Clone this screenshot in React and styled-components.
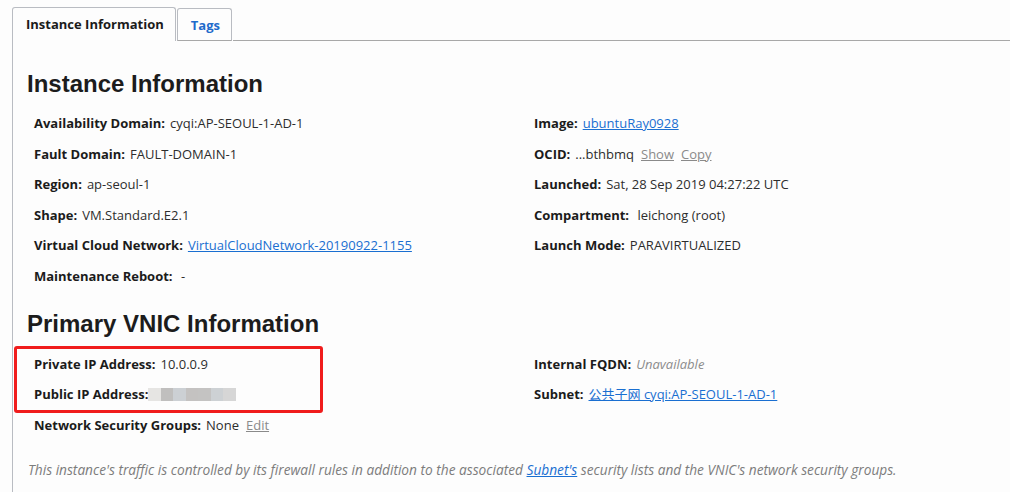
import styled, { createGlobalStyle } from 'styled-components'

const GlobalStyle = createGlobalStyle`
  html, body {
    margin: 0;
    padding: 0;
    background: #fdfdfd;
    font-family: "Open Sans", "Noto Sans", "Noto Sans CJK SC", sans-serif;
    color: #2a2a2a;
  }
`

const leftRows = [
  { label: 'Availability Domain:', value: 'cyqi:AP-SEOUL-1-AD-1' },
  { label: 'Fault Domain:', value: 'FAULT-DOMAIN-1' },
  { label: 'Region:', value: 'ap-seoul-1' },
  { label: 'Shape:', value: 'VM.Standard.E2.1' },
  { label: 'Virtual Cloud Network:', link: 'VirtualCloudNetwork-20190922-1155' },
  { label: 'Maintenance Reboot:', value: ' -' },
]

const blurCells = ['#e6e5e3', '#c0bfbe', '#ccd0d4', '#c4c2c1', '#c4c3c2', '#cdd1d4', '#d6d6d6']

const App = () => {
  return (
    <>
      <GlobalStyle />
      <Page>
        <TabBar>
          <Tab $active>Instance Information</Tab>
          <Tab>Tags</Tab>
          <TabRest />
        </TabBar>
        <Panel>
          <Heading>Instance Information</Heading>
          <Columns>
            <Column>
              {leftRows.map((r) => (
                <Row key={r.label}>
                  <Label>{r.label}</Label>
                  {r.link ? <Link href="#">{r.link}</Link> : <Value>{r.value}</Value>}
                </Row>
              ))}
            </Column>
            <Column>
              <Row>
                <Label>Image:</Label>
                <Link href="#">ubuntuRay0928</Link>
              </Row>
              <Row>
                <Label>OCID:</Label>
                <Value>...bthbmq</Value>
                <Action href="#">Show</Action>
                <Action href="#">Copy</Action>
              </Row>
              <Row>
                <Label>Launched:</Label>
                <Value>Sat, 28 Sep 2019 04:27:22 UTC</Value>
              </Row>
              <Row>
                <Label>Compartment:</Label>
                <Value>&nbsp;leichong (root)</Value>
              </Row>
              <Row>
                <Label>Launch Mode:</Label>
                <Value>PARAVIRTUALIZED</Value>
              </Row>
            </Column>
          </Columns>

          <Heading $second>Primary VNIC Information</Heading>
          <Columns>
            <Column>
              <Highlight>
                <Row>
                  <Label>Private IP Address:</Label>
                  <Value>10.0.0.9</Value>
                </Row>
                <Row>
                  <Label $tight>Public IP Address:</Label>
                  <Blur>
                    {blurCells.map((c, i) => (
                      <BlurCell key={i} style={{ background: c }} />
                    ))}
                  </Blur>
                </Row>
              </Highlight>
              <Row>
                <Label>Network Security Groups:</Label>
                <Value>None</Value>
                <Action href="#">Edit</Action>
              </Row>
            </Column>
            <Column>
              <Row>
                <Label>Internal FQDN:</Label>
                <Muted>Unavailable</Muted>
              </Row>
              <Row>
                <Label>Subnet:</Label>
                <Link href="#">公共子网 cyqi:AP-SEOUL-1-AD-1</Link>
              </Row>
            </Column>
          </Columns>

          <Note>
            This instance's traffic is controlled by its firewall rules in addition to the associated{' '}
            <NoteLink href="#">Subnet's</NoteLink> security lists and the VNIC's network security groups.
          </Note>
        </Panel>
      </Page>
    </>
  )
}

export default App

const Page = styled.div`
  padding-top: 7px;
  padding-left: 12px;
  height: 485px;
  overflow: hidden;
`

const TabBar = styled.div`
  display: flex;
  align-items: flex-end;
  height: 34px;
`

const Tab = styled.div`
  box-sizing: border-box;
  height: ${(p) => (p.$active ? '34px' : '33px')};
  padding: 0 11px 0 13px;
  display: flex;
  align-items: center;
  font-size: 13px;
  font-weight: 700;
  color: ${(p) => (p.$active ? '#1b1b1b' : '#1f6bcb')};
  border: 1px solid #b9bcc2;
  border-bottom: ${(p) => (p.$active ? 'none' : '1px solid #a8a8a8')};
  border-radius: 3px 3px 0 0;
  background: #fdfdfd;
  margin-right: 1px;
  padding-bottom: ${(p) => (p.$active ? '1px' : '0')};
`

const TabRest = styled.div`
  flex: 1;
  border-bottom: 1px solid #a8a8a8;
`

const Panel = styled.div`
  border-left: 1px solid #b9bcc2;
  padding: 27px 0 0 14px;
  height: 480px;
`

const Heading = styled.h2`
  margin: ${(p) => (p.$second ? '16px 0 9px' : '0 0 8px')};
  font-family: "Liberation Sans", Arial, sans-serif;
  font-size: 24px;
  font-weight: 700;
  line-height: 32px;
  color: #1c1c1c;
`

const Columns = styled.div`
  display: grid;
  grid-template-columns: 500px 1fr;
`

const Column = styled.div`
  display: flex;
  flex-direction: column;
`

const Row = styled.div`
  display: flex;
  align-items: baseline;
  height: 30.6px;
  line-height: 30.6px;
  padding-left: 7px;
  font-size: 13px;
  white-space: nowrap;
`

const Label = styled.span`
  font-weight: 700;
  color: #1b1b1b;
  margin-right: ${(p) => (p.$tight ? '0' : '5px')};
`

const Value = styled.span`
  color: #2d2d2d;
  white-space: pre;
`

const Link = styled.a`
  color: #1a6fd1;
  text-decoration: underline;
`

const Action = styled.a`
  color: #8a8a8a;
  text-decoration: underline;
  margin-left: 7px;
`

const Muted = styled.span`
  color: #8c8c8c;
  font-style: italic;
`

const Highlight = styled.div`
  margin-left: -13px;
  padding-left: 10px;
  width: 293px;
  border: 3px solid #f01c1c;
  border-radius: 3px;
  margin-top: -3px;
  margin-bottom: -3px;
`

const Blur = styled.span`
  display: inline-flex;
  align-self: center;
  height: 13px;
`

const BlurCell = styled.span`
  width: 12.5px;
  height: 13px;
`

const Note = styled.p`
  margin: 20px 0 0 1px;
  font-size: 13.7px;
  font-style: italic;
  color: #7c7c7c;
`

const NoteLink = styled.a`
  color: #1a6fd1;
  text-decoration: underline;
`
